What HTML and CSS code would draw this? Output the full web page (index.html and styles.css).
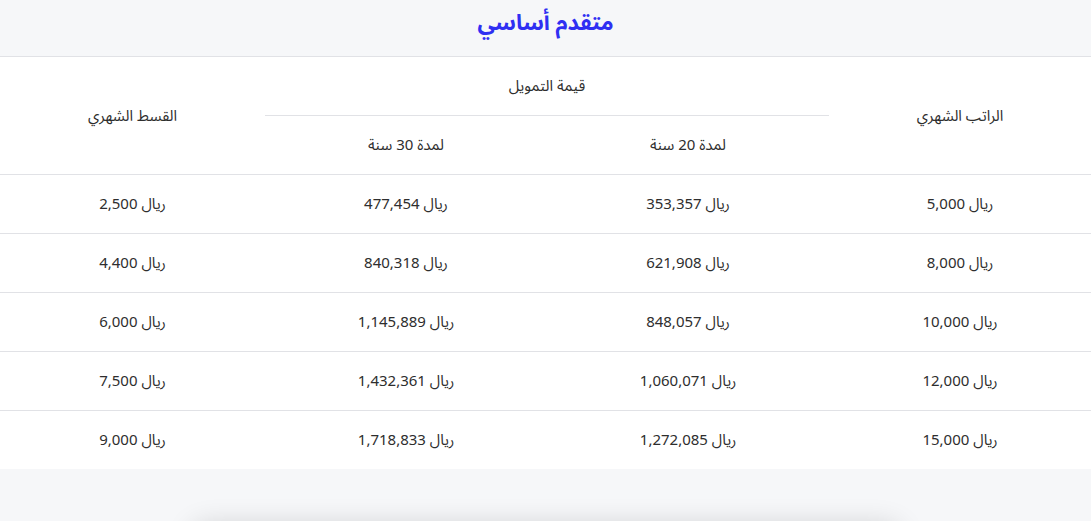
FILE: index.html
```html
<!DOCTYPE html>
<html lang="ar" dir="rtl">
<head>
    <meta charset="UTF-8">
    <meta name="viewport" content="width=device-width, initial-scale=1.0">
    <title>التمويل</title>
    <link rel="stylesheet" href="styles.css">
</head>
<body>
    <!-- Title bar -->
    <div class="plan-header">
        <h2 class="plan-title">متقدم أساسي</h2>
    </div>

    <!-- Financing table -->
    <table class="finance-table">
        <colgroup>
            <col class="col-salary">
            <col class="col-mid">
            <col class="col-mid">
            <col class="col-install">
        </colgroup>
        <thead>
            <tr>
                <th rowspan="2">الراتب الشهري</th>
                <th colspan="2" class="group-head">قيمة التمويل</th>
                <th rowspan="2">القسط الشهري</th>
            </tr>
            <tr>
                <th>لمدة 20 سنة</th>
                <th>لمدة 30 سنة</th>
            </tr>
        </thead>
        <tbody>
            <tr>
                <td>ريال 5,000</td>
                <td>ريال 353,357</td>
                <td>ريال 477,454</td>
                <td>ريال 2,500</td>
            </tr>
            <tr>
                <td>ريال 8,000</td>
                <td>ريال 621,908</td>
                <td>ريال 840,318</td>
                <td>ريال 4,400</td>
            </tr>
            <tr>
                <td>ريال 10,000</td>
                <td>ريال 848,057</td>
                <td>ريال 1,145,889</td>
                <td>ريال 6,000</td>
            </tr>
            <tr>
                <td>ريال 12,000</td>
                <td>ريال 1,060,071</td>
                <td>ريال 1,432,361</td>
                <td>ريال 7,500</td>
            </tr>
            <tr>
                <td>ريال 15,000</td>
                <td>ريال 1,272,085</td>
                <td>ريال 1,718,833</td>
                <td>ريال 9,000</td>
            </tr>
        </tbody>
    </table>

    <!-- Next card (only its shadow shows) -->
    <div class="next-card"></div>
</body>
</html>
```

FILE: styles.css
```css
body {
    margin: 0;
    font-family: "Noto Sans", "Noto Sans Arabic", "DejaVu Sans", sans-serif;
    background-color: #f6f7f9;
    color: #2e2e2e;
    height: 521px;
    overflow: hidden;
}

/* Title bar */
.plan-header {
    height: 56px;
    display: flex;
    justify-content: center;
    align-items: center;
    border-bottom: 1px solid #e1e2e6;
}

.plan-title {
    margin: 0;
    font-size: 22px;
    font-weight: bold;
    color: #2f2ff2;
    position: relative;
    top: -5px;
}

/* Table */
.finance-table {
    width: 100%;
    border-collapse: collapse;
    background-color: #ffffff;
    table-layout: fixed;
}

.col-salary { width: 262px; }
.col-mid { width: 282px; }
.col-install { width: 265px; }

.finance-table th,
.finance-table td {
    text-align: center;
    font-size: 15px;
    font-weight: normal;
    padding: 0;
    height: 58px;
}

.finance-table .group-head {
    border-bottom: 1px solid #e1e2e6;
}

.finance-table tbody tr {
    border-top: 1px solid #e1e2e6;
}

.next-card {
    width: 710px;
    height: 40px;
    margin: 56px auto 0;
    background-color: #ffffff;
    border-radius: 16px;
    box-shadow: 0 0 28px rgba(0, 0, 0, 0.16);
}
```
